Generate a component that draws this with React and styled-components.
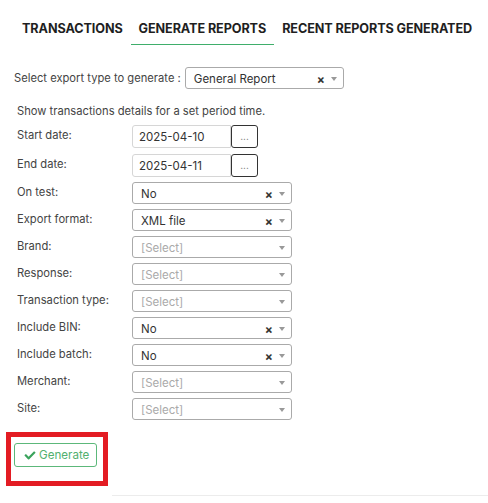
import React from "react";
import styled, { createGlobalStyle } from "styled-components";

const Global = createGlobalStyle`
  html, body { margin: 0; padding: 0; background: #fff; }
  body { font-family: Inter, "Noto Sans", Arial, sans-serif; color: #444; }
  * { box-sizing: border-box; }
`;

const Page = styled.div`
  width: 488px;
  padding-top: 14px;
`;

const Tabs = styled.nav`
  display: flex;
  padding-left: 14px;
`;

const Tab = styled.div`
  padding: 7px 8px 8px;
  font-size: 12.65px;
  font-weight: 700;
  color: #1f1f1f;
  letter-spacing: -0.1px;
  border-bottom: 1px solid ${(p) => (p.$active ? "#3fae6b" : "transparent")};
  white-space: nowrap;
`;

const ExportRow = styled.div`
  display: flex;
  align-items: center;
  gap: 4px;
  margin: 22px 0 0 14px;
  font-size: 11.2px;
`;

const Form = styled.div`
  padding: 13px 0 0 17px;
  font-size: 11.2px;
`;

const Intro = styled.div`
  line-height: 18px;
  margin-bottom: 5px;
`;

const Row = styled.div`
  display: flex;
  align-items: flex-start;
  margin-bottom: ${(p) => p.$gap || 5}px;
`;

const Label = styled.div`
  width: 115px;
  padding-top: 2px;
  line-height: 17px;
  color: #444;
`;

const DateInput = styled.div`
  width: 99px;
  height: 23px;
  border: 1px solid #d6d6d6;
  border-radius: 3px 0 0 3px;
  padding-left: 6px;
  display: flex;
  align-items: center;
  color: #333;
  font-size: 11.5px;
`;

const DotsButton = styled.div`
  width: 27px;
  height: 23px;
  border: 1px solid #333;
  border-radius: 3px;
  display: flex;
  align-items: center;
  justify-content: center;
  color: #777;
  font-size: 10px;
  padding-bottom: 2px;
`;

const SelectBox = styled.div`
  width: ${(p) => p.$w || 160}px;
  height: 22px;
  border: 1px solid #aaa;
  border-radius: 3px;
  display: flex;
  align-items: center;
  padding: 2px 6px 0 8px;
  background: #fff;
`;

const SelectText = styled.span`
  flex: 1;
  color: ${(p) => (p.$placeholder ? "#aaa" : "#333")};
  font-size: 11.5px;
  white-space: nowrap;
`;

const Clear = styled.span`
  font-size: 12px;
  font-weight: 700;
  color: #333;
  margin-right: 6px;
`;

const Arrow = styled.span`
  width: 0;
  height: 0;
  border-left: 3.5px solid transparent;
  border-right: 3.5px solid transparent;
  border-top: 4px solid #999;
  margin-top: -1px;
`;

const Highlight = styled.div`
  margin: 12px 0 0 6px;
  width: 102px;
  height: 54px;
  border: 5px solid #e31c23;
  padding: 6px 0 0 3px;
`;

const GenerateButton = styled.button`
  display: flex;
  align-items: center;
  gap: 3px;
  width: 83px;
  height: 24px;
  border: 1px solid #5cb87a;
  border-radius: 3px;
  background: #fff;
  color: #52b06f;
  font-family: Inter, "Noto Sans", Arial, sans-serif;
  font-size: 11.6px;
  padding: 0 0 0 9px;
`;

const Footer = styled.div`
  margin: 9px 0 0 112px;
  border-top: 1px solid #ececec;
  height: 8px;
`;

function Select({ value, placeholder, clearable, w }) {
  return (
    <SelectBox $w={w}>
      <SelectText $placeholder={!value}>{value || placeholder}</SelectText>
      {clearable && value && <Clear>×</Clear>}
      <Arrow />
    </SelectBox>
  );
}

const rows = [
  ["On test:", "No"],
  ["Export format:", "XML file"],
  ["Brand:", null],
  ["Response:", null],
  ["Transaction type:", null],
  ["Include BIN:", "No"],
  ["Include batch:", "No"],
  ["Merchant:", null],
  ["Site:", null],
];

export default function App() {
  return (
    <>
      <Global />
      <Page>
        <Tabs>
          <Tab>TRANSACTIONS</Tab>
          <Tab $active>GENERATE REPORTS</Tab>
          <Tab>RECENT REPORTS GENERATED</Tab>
        </Tabs>
        <ExportRow>
          <span>Select export type to generate :</span>
          <Select value="General Report" clearable w={159} />
        </ExportRow>
        <Form>
          <Intro>Show transactions details for a set period time.</Intro>
          <Row $gap={6}>
            <Label>Start date:</Label>
            <DateInput>2025-04-10</DateInput>
            <DotsButton>...</DotsButton>
          </Row>
          <Row $gap={5}>
            <Label>End date:</Label>
            <DateInput>2025-04-11</DateInput>
            <DotsButton>...</DotsButton>
          </Row>
          {rows.map(([label, value]) => (
            <Row key={label} $gap={5}>
              <Label>{label}</Label>
              <Select value={value} placeholder="[Select]" clearable />
            </Row>
          ))}
        </Form>
        <Highlight>
          <GenerateButton>
            <svg width="12" height="11" viewBox="0 0 512 512">
              <path
                fill="#3aa35c"
                d="M173.9 439.4l-166.4-166.4c-10-10-10-26.2 0-36.2l36.2-36.2c10-10 26.2-10 36.2 0L192 312.7 432.1 72.6c10-10 26.2-10 36.2 0l36.2 36.2c10 10 10 26.2 0 36.2L210.1 439.4c-10 10-26.2 10-36.2 0z"
              />
            </svg>
            Generate
          </GenerateButton>
        </Highlight>
        <Footer />
      </Page>
    </>
  );
}
